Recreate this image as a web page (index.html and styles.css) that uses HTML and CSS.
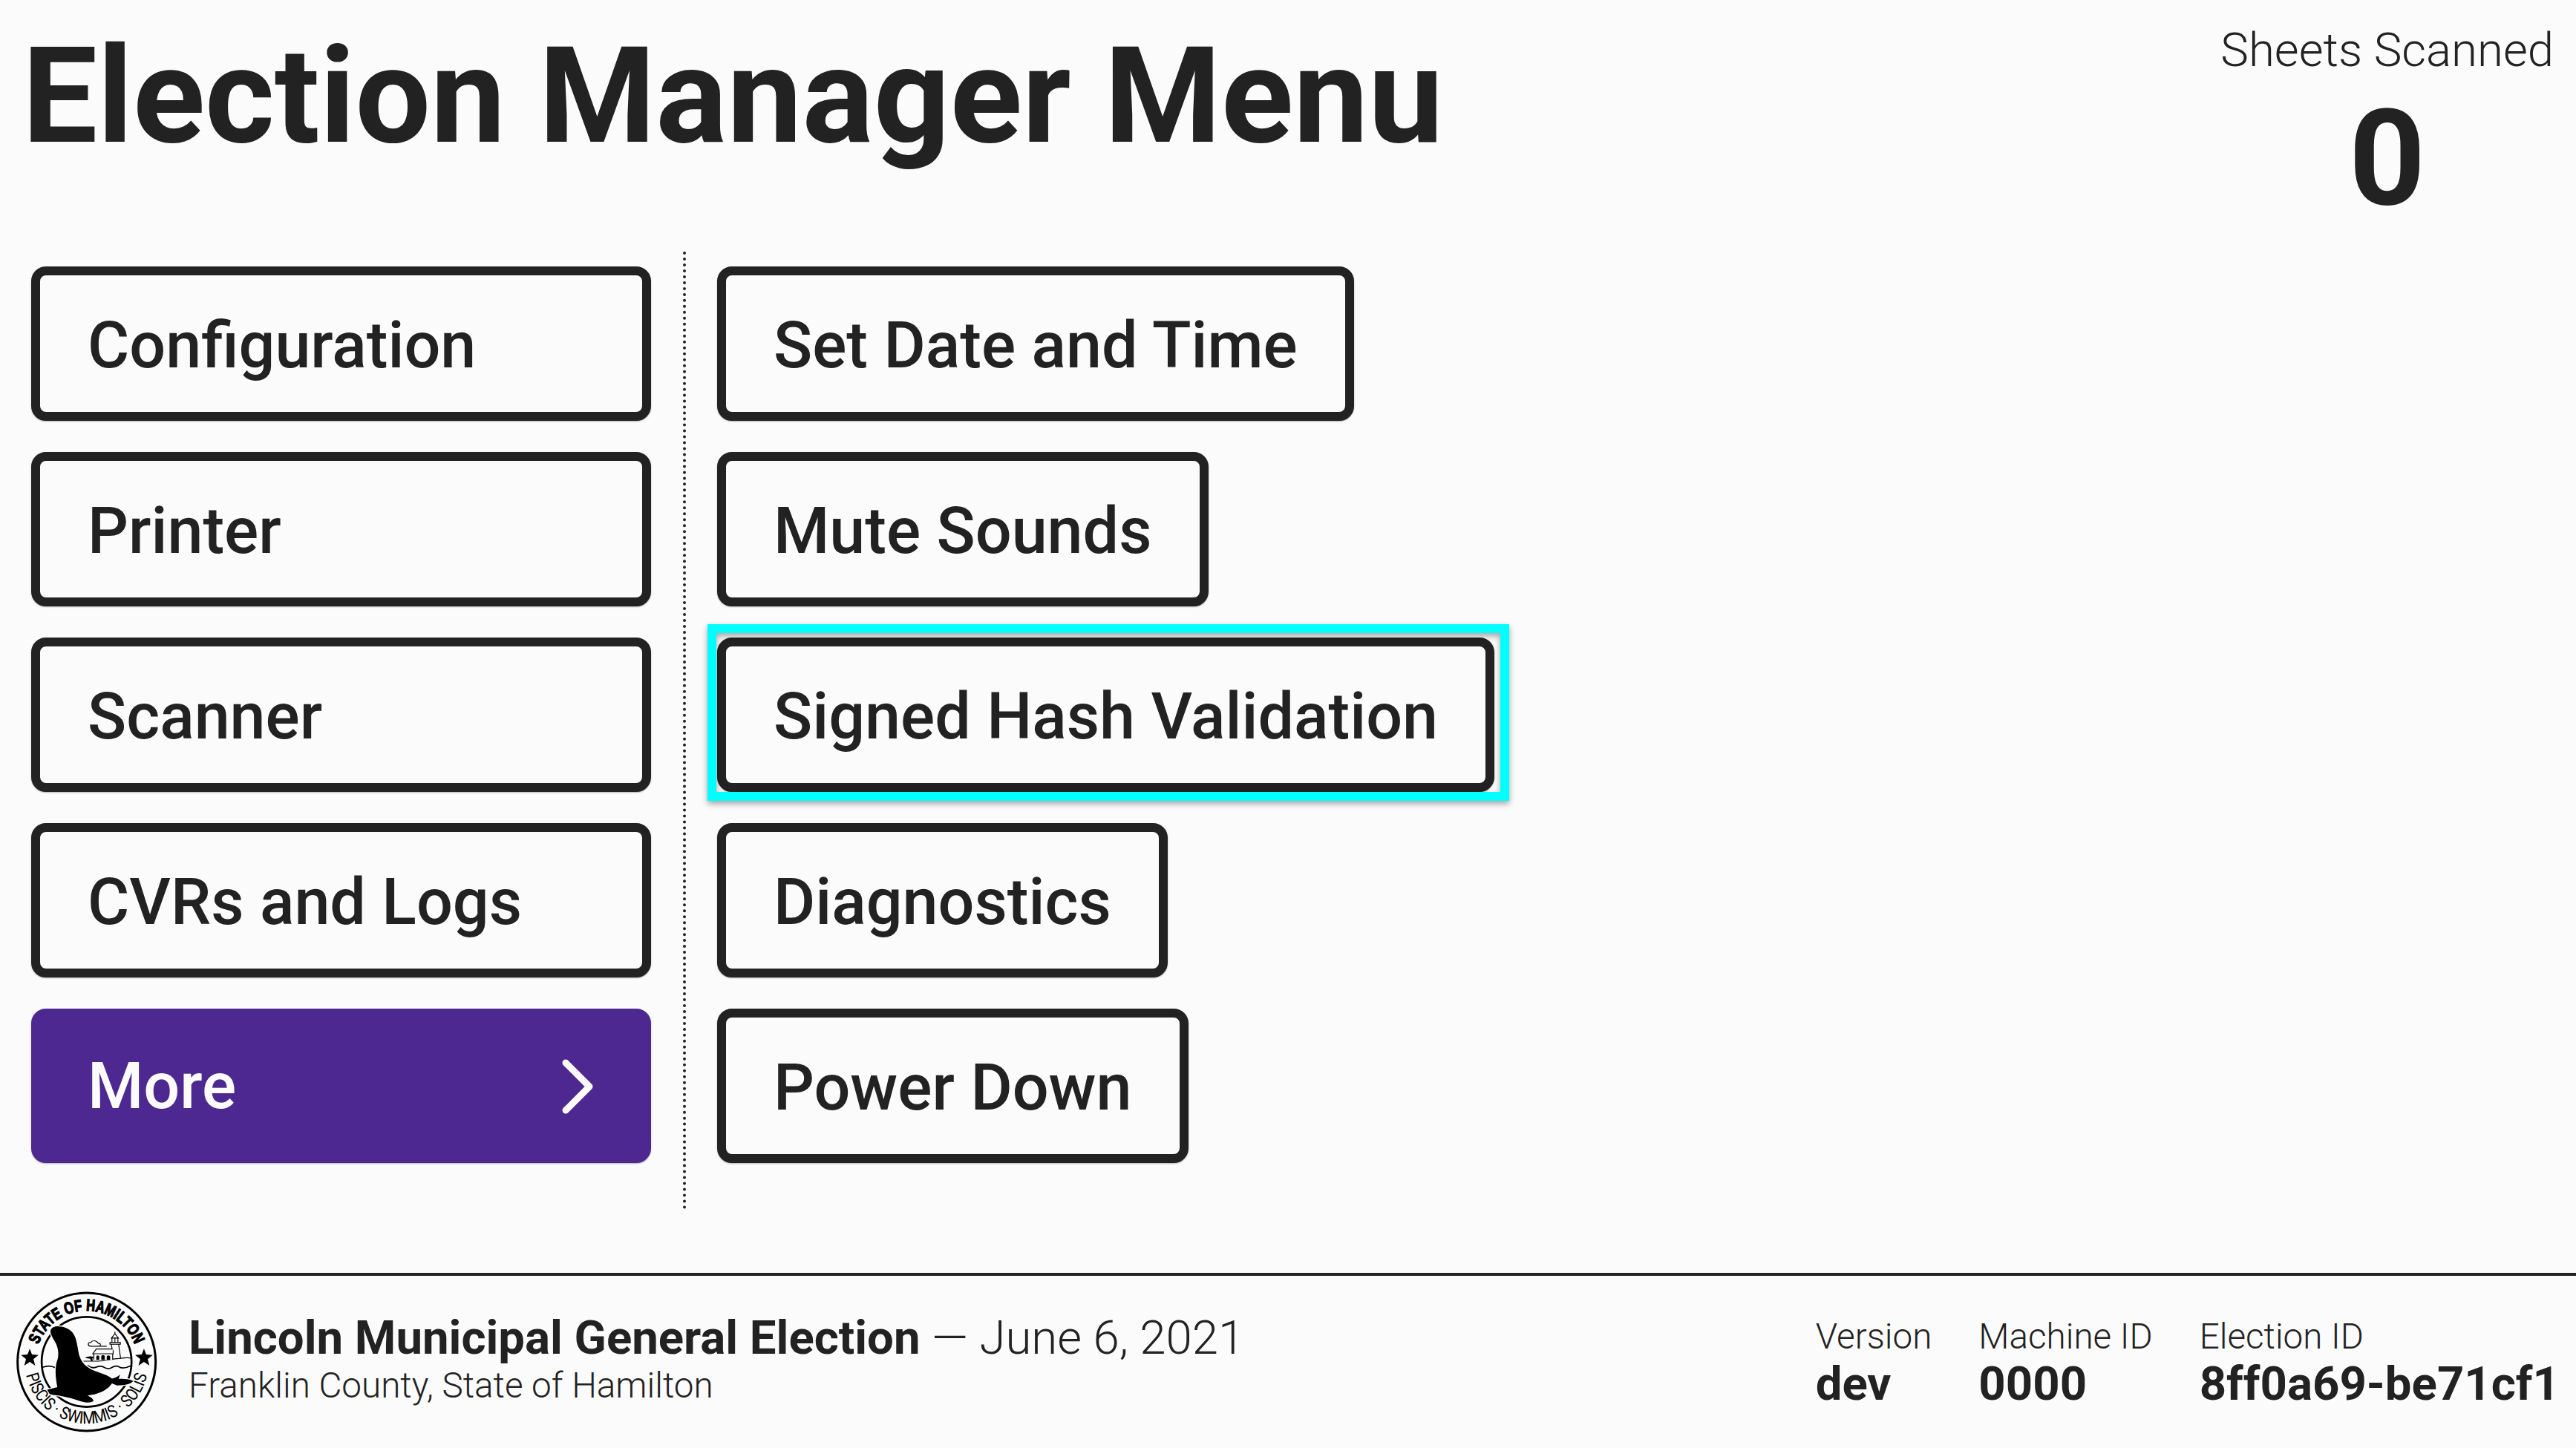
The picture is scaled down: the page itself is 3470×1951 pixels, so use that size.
FILE: index.html
```html
<!DOCTYPE html>
<html lang="en">
<head>
    <meta charset="UTF-8">
    <title>Election Manager Menu</title>
    <link rel="stylesheet" href="styles.css">
</head>
<body>
    <div class="screen">
        <!-- Header Section -->
        <header class="top">
            <h1 class="title">Election Manager Menu</h1>
            <div class="stat">
                <div class="stat-label">Sheets Scanned</div>
                <div class="stat-value">0</div>
            </div>
        </header>

        <!-- Menu Section -->
        <main class="menu">
            <div class="menu-col menu-left">
                <button class="btn btn-wide">Configuration</button>
                <button class="btn btn-wide">Printer</button>
                <button class="btn btn-wide">Scanner</button>
                <button class="btn btn-wide">CVRs and Logs</button>
                <button class="btn btn-wide btn-primary">
                    <span>More</span>
                    <svg class="chevron" viewBox="0 0 42 74"><path d="M5 5 L37 37 L5 69"/></svg>
                </button>
            </div>
            <div class="menu-col menu-right">
                <button class="btn">Set Date and Time</button>
                <button class="btn">Mute Sounds</button>
                <button class="btn btn-focus">Signed Hash Validation</button>
                <button class="btn">Diagnostics</button>
                <button class="btn">Power Down</button>
            </div>
        </main>

        <!-- Footer Section -->
        <footer class="bottom">
            <svg class="seal" viewBox="66 122 568 568">
                <defs>
                    <path id="arc-top" d="M143 406 A206 206 0 0 1 555 406"/>
                    <path id="arc-bottom" d="M100 406 A249 249 0 0 0 598 406"/>
                </defs>
                <circle class="ring-outer" cx="349" cy="406" r="278"/>
                <circle class="ring-inner" cx="349" cy="406" r="181"/>
                <text class="seal-top" textLength="505" lengthAdjust="spacingAndGlyphs"><textPath href="#arc-top" startOffset="50%" text-anchor="middle">STATE OF HAMILTON</textPath></text>
                <text class="seal-bottom" textLength="676" lengthAdjust="spacingAndGlyphs"><textPath href="#arc-bottom" startOffset="50%" text-anchor="middle">PISCIS · SWIMMIS · SOLIS</textPath></text>
                <path class="star" d="M120 353 L129 376 L155 378 L135 395 L142 421 L120 406 L98 421 L105 395 L85 378 L111 376 Z"/>
                <path class="star" d="M580 353 L589 376 L615 378 L595 395 L602 421 L580 406 L558 421 L565 395 L545 378 L571 376 Z"/>
                <!-- scene behind the sea lion -->
                <path class="line" d="M336 403 H396 C430 402 450 393 478 392 C495 391 510 386 527 391"/>
                <path class="wave" d="M172 428 C190 420 205 420 225 430 M352 420 C362 428 372 432 384 428 S406 420 416 426 S438 436 448 430 S470 420 480 426 S502 434 527 422"/>
                <path class="thin" d="M378 398 V373 H454 V398 M374 373 H456 V354 H388 Z"/>
                <path class="fill" d="M388 398 V386 C388 378 400 378 400 386 V398 Z M408 398 V384 C408 376 422 376 422 384 V398 Z M430 398 V386 C430 378 444 378 444 386 V398 Z"/>
                <path class="thin" d="M452 354 L448 335 H478 L486 393 M443 328 H485 V335 H443 Z M451 328 V310 H475 V328 M463 310 V328 M449 310 H477 L463 292 Z M463 292 V284"/>
                <path class="line" d="M430 343 H364 C352 340 353 326 366 328 C372 317 390 319 396 331 C404 331 408 337 402 340"/>
                <path class="fill" d="M343 390 C355 382 368 382 380 388 L372 392 L374 402 H366 L364 393 Z"/>
                <!-- sea lion -->
                <path class="lion" d="M204 278 C210 266 222 262 238 263 C262 264 286 274 298 296 C310 318 312 345 318 375 C326 405 345 425 372 438 C405 452 435 458 451 473 C462 472 474 466 484 457 L478 475 C500 473 520 475 537 483 C528 494 508 500 472 501 L451 493 C438 512 420 525 390 534 C378 538 365 540 352 541 C362 545 374 552 377 563 C365 574 335 570 311 560 C285 550 262 547 240 542 C222 540 208 538 200 535 L190 518 L231 508 C226 475 220 445 228 408 C238 385 236 362 230 343 C224 325 212 312 207 298 C204 290 203 284 204 278 Z"/>
            </svg>
            <div class="election">
                <div class="election-title"><strong>Lincoln Municipal General Election</strong> — June 6, 2021</div>
                <div class="election-place">Franklin County, State of Hamilton</div>
            </div>
            <div class="meta">
                <div class="meta-item">
                    <div class="meta-label">Version</div>
                    <div class="meta-value">dev</div>
                </div>
                <div class="meta-item">
                    <div class="meta-label">Machine ID</div>
                    <div class="meta-value">0000</div>
                </div>
                <div class="meta-item">
                    <div class="meta-label">Election ID</div>
                    <div class="meta-value">8ff0a69-be71cf1</div>
                </div>
            </div>
        </footer>
    </div>
</body>
</html>
```

FILE: styles.css
```css
html, body {
    margin: 0;
    padding: 0;
}
body {
    background: #fbfbfb;
    color: #222;
    font-family: Roboto, "Liberation Sans", sans-serif;
}
.screen {
    display: flex;
    flex-direction: column;
    height: 1951px;
    overflow: hidden;
}

/* header */
.top {
    display: flex;
    justify-content: space-between;
    height: 339px;
    padding: 0 30px 0 30px;
    box-sizing: border-box;
}
.title {
    margin: 20px 0 0;
    font-size: 180px;
    line-height: 220px;
    font-weight: 700;
}
.stat {
    text-align: center;
    padding-top: 30px;
}
.stat-label {
    font-size: 63.5px;
    font-weight: 300;
    line-height: 76px;
}
.stat-value {
    font-size: 180px;
    font-weight: 700;
    line-height: 216px;
}

/* menu */
.menu {
    display: flex;
    flex: 1;
    align-items: flex-start;
    padding-left: 42px;
}
.menu-col {
    display: flex;
    flex-direction: column;
    align-items: flex-start;
    gap: 42.5px;
    padding: 20px 0 63px;
}
.menu-left {
    width: 835px;
    padding-right: 43px;
    border-right: 4px dotted #222;
}
.menu-right {
    margin-left: 42px;
}
.btn {
    position: relative;
    display: block;
    box-sizing: border-box;
    height: 207.5px;
    padding: 5px 64px 0;
    background: #fbfbfb;
    border: 12px solid #222;
    border-radius: 20px;
    color: #222;
    font-family: inherit;
    font-size: 86.2px;
    font-weight: 500;
    text-align: left;
    white-space: nowrap;
    box-shadow: 0 1px 2px rgba(0, 0, 0, 0.3);
}
.btn-wide {
    width: 100%;
}
.btn-primary {
    display: flex;
    align-items: center;
    justify-content: space-between;
    padding: 2px 66px 0 64px;
    background: #4d2890;
    border-color: #4d2890;
    color: #fbfbfb;
}
.chevron {
    width: 42px;
    height: 74px;
    fill: none;
    stroke: #fbfbfb;
    stroke-width: 9;
    stroke-linecap: round;
    stroke-linejoin: round;
}
.btn-focus::after {
    content: "";
    position: absolute;
    top: -30px;
    left: -25px;
    right: -32px;
    bottom: -24px;
    border: 12px solid #0ff;
    box-shadow: 0 4px 8px rgba(0, 0, 0, 0.35), inset 0 4px 8px rgba(0, 0, 0, 0.35);
}

/* footer */
.bottom {
    display: flex;
    align-items: center;
    height: 236px;
    padding: 0 22px 0 22px;
    box-sizing: border-box;
    border-top: 4px solid #222;
}
.seal {
    width: 190px;
    height: 190px;
    flex-shrink: 0;
    margin-right: 42px;
}
.ring-outer {
    fill: none;
    stroke: #000;
    stroke-width: 9;
}
.ring-inner {
    fill: none;
    stroke: #000;
    stroke-width: 8;
}
.seal-top {
    font-family: "Liberation Sans", sans-serif;
    font-size: 66px;
    font-weight: 700;
    fill: #000;
    stroke: #000;
    stroke-width: 4;
}
.seal-bottom {
    font-family: Roboto, sans-serif;
    font-size: 70px;
    fill: #000;
}
.star, .fill {
    fill: #000;
}
.line {
    fill: none;
    stroke: #000;
    stroke-width: 3.5;
}
.thin {
    fill: #fbfbfb;
    stroke: #000;
    stroke-width: 3.5;
}
.wave {
    fill: none;
    stroke: #000;
    stroke-width: 5;
}
.lion {
    fill: #000;
    stroke: #fbfbfb;
    stroke-width: 8;
    paint-order: stroke;
}
.election {
    flex: 1;
    margin-top: -8px;
}
.election-title {
    font-size: 63.5px;
    font-weight: 300;
    line-height: 72px;
}
.election-title strong {
    font-weight: 700;
}
.election-place {
    font-size: 47.6px;
    font-weight: 300;
    line-height: 56px;
}
.meta {
    display: flex;
    gap: 63px;
}
.meta-label {
    font-size: 47.6px;
    font-weight: 300;
    line-height: 60px;
}
.meta-value {
    font-size: 63.5px;
    font-weight: 700;
    line-height: 68px;
}
```
